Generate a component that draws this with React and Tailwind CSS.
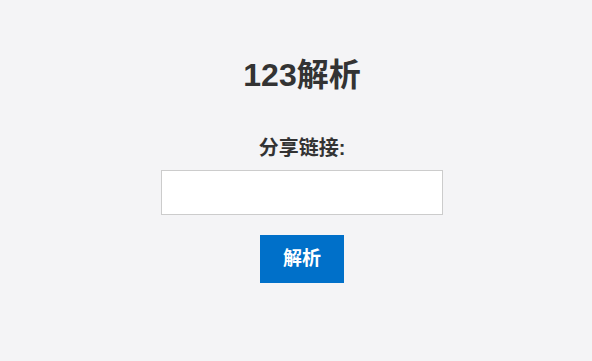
export default function App() {
  return (
    <div
      className="min-h-[361px] w-full bg-[#f4f4f6] flex flex-col items-center pt-[55px] pl-[12px] text-[#333]"
      style={{ fontFamily: '"Liberation Sans", "Noto Sans CJK SC", sans-serif' }}
    >
      <h1 className="text-[32px] leading-[40px] font-bold">123解析</h1>
      <label className="mt-[40px] text-[20px] leading-[26px] font-bold">分享链接:</label>
      <input
        type="text"
        className="mt-[9px] w-[282px] h-[45px] bg-white border border-[#ccc] px-2 outline-none"
      />
      <button className="mt-[20px] w-[84px] h-[48px] bg-[#0070c9] text-white text-[19px] font-bold">
        解析
      </button>
    </div>
  );
}
